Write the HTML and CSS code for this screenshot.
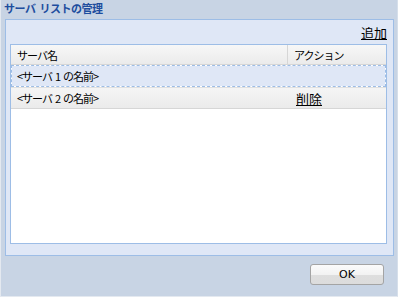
FILE: index.html
```html
<!DOCTYPE html>
<html lang="ja">
<head>
<meta charset="utf-8">
<link rel="stylesheet" href="styles.css">
</head>
<body>
<div class="window">
  <div class="title">サーバ リストの管理</div>
  <div class="panel">
    <div class="toolbar"><a class="link" href="#">追加</a></div>
    <div class="table">
      <div class="row head">
        <div class="cell name">サーバ名</div>
        <div class="cell action">アクション</div>
      </div>
      <div class="row selected">
        <div class="cell name">&lt;サーバ 1 の名前&gt;</div>
        <div class="cell action"></div>
      </div>
      <div class="row item">
        <div class="cell name">&lt;サーバ 2 の名前&gt;</div>
        <div class="cell action del"><a class="link" href="#">削除</a></div>
      </div>
    </div>
  </div>
  <div class="footer">
    <button class="btn">OK</button>
  </div>
</div>
</body>
</html>
```
FILE: styles.css
```css
html, body {
  margin: 0;
  padding: 0;
}
body {
  width: 398px;
  height: 297px;
  overflow: hidden;
  font-family: "Noto Sans CJK JP", "DejaVu Sans", sans-serif;
  font-size: 11px;
  color: #000;
}
.window {
  box-sizing: border-box;
  width: 398px;
  height: 297px;
  background: #c8d4e4;
  border-left: 1px solid #e4e9f0;
  border-bottom: 1px solid #e4e9f0;
  border-right: 1px solid #d6dfea;
  display: flex;
  flex-direction: column;
}
.title {
  height: 19px;
  line-height: 16px;
  padding-left: 3px;
  font-weight: bold;
  color: #1d4d9e;
  font-size: 11px;
  letter-spacing: -0.5px;
  word-spacing: 2px;
}
.panel {
  margin: 0 3px 0 4px;
  height: 237px;
  box-sizing: border-box;
  background: #dfe7f6;
  border: 1px solid #9dbde6;
  padding: 0 6px 11px 4px;
  display: flex;
  flex-direction: column;
}
.toolbar {
  height: 24px;
  display: flex;
  justify-content: flex-end;
  align-items: center;
}
.link {
  color: #000;
  text-decoration: underline;
  font-size: 13px;
  letter-spacing: 0;
  word-spacing: 0;
}
.table {
  flex: 1;
  background: #fff;
  border: 1px solid #9dbde6;
  display: flex;
  flex-direction: column;
}
.row {
  display: flex;
  box-sizing: border-box;
}
.cell {
  display: flex;
  align-items: center;
  padding-left: 6px;
  letter-spacing: -1px;
  word-spacing: 1.5px;
  white-space: pre;
}
.cell.name {
  flex: 1;
}
.cell.action {
  width: 99px;
  box-sizing: border-box;
}
.head {
  height: 20px;
  background: linear-gradient(#f7f7f7, #ebebeb);
  border-bottom: 1px solid #d6d6d6;
}
.head .action {
  border-left: 1px solid #d6d6d6;
}
.selected {
  height: 22px;
  border: 1px dashed #9dbde6;
  background-color: #dfe7f6;
  background-clip: padding-box;
}
.selected .name {
  padding-left: 5px;
}
.item {
  height: 22px;
  background: linear-gradient(#f5f5f5, #ebebeb);
  border-top: 1px solid #e0e0e0;
  border-bottom: 1px solid #d6d6d6;
}
.item .del {
  padding-left: 9px;
}
.footer {
  display: flex;
  justify-content: flex-end;
  padding: 8px 13px 0 0;
}
.btn {
  width: 74px;
  height: 21px;
  border: 1px solid #a4a4a4;
  border-radius: 3px;
  background: linear-gradient(#fbfbfb 0%, #f2f2f2 50%, #dedede 50%, #dcdcdc 100%);
  font-family: "DejaVu Sans", sans-serif;
  font-size: 11px;
  color: #000;
  padding: 0;
}
```
